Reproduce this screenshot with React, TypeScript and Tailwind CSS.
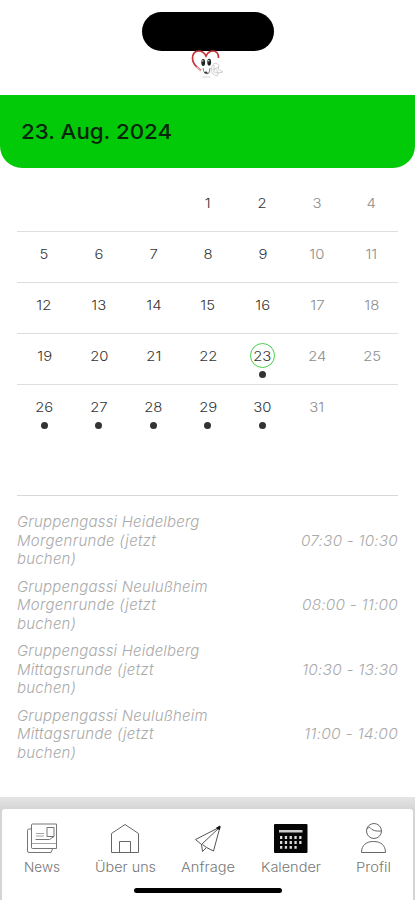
const weeks: (number | null)[][] = [
  [null, null, null, 1, 2, 3, 4],
  [5, 6, 7, 8, 9, 10, 11],
  [12, 13, 14, 15, 16, 17, 18],
  [19, 20, 21, 22, 23, 24, 25],
  [26, 27, 28, 29, 30, 31, null],
];

const selectedDay = 23;
const daysWithEvents = [23, 26, 27, 28, 29, 30];

const events = [
  { place: "Gruppengassi Heidelberg", round: "Morgenrunde (jetzt", time: "07:30 - 10:30", timeWidth: 97 },
  { place: "Gruppengassi Neulußheim", round: "Morgenrunde (jetzt", time: "08:00 - 11:00", timeWidth: 96 },
  { place: "Gruppengassi Heidelberg", round: "Mittagsrunde (jetzt", time: "10:30 - 13:30", timeWidth: 96 },
  { place: "Gruppengassi Neulußheim", round: "Mittagsrunde (jetzt", time: "11:00 - 14:00", timeWidth: 94 },
];

function Logo() {
  return (
    <svg width="34" height="28" viewBox="0 0 34 28" fill="none">
      <path d="M10 20.500C5 17 1.500 13 1.500 8.500C1.500 3.500 4 1 7.500 1C11 1 13.500 3 15 6C16.500 3 19 1 22 1C25.500 1 27.500 3.500 27.500 8" stroke="#c8353b" strokeWidth="1.700" />
      <path d="M5.500 17L10 21" stroke="#e9b5b7" strokeWidth="1.500" />
      <ellipse cx="12.200" cy="12.500" rx="1.900" ry="3.400" fill="#222" />
      <ellipse cx="18.200" cy="12.200" rx="1.900" ry="3.400" fill="#222" />
      <circle cx="11.800" cy="11" r="0.700" fill="#fff" />
      <circle cx="17.800" cy="10.700" r="0.700" fill="#fff" />
      <path d="M12 18l1 4 2 2 3-1 1-5" stroke="#777" strokeWidth="0.900" />
      <path d="M13.500 23l1.500-1 1.500 1.500" stroke="#333" strokeWidth="1.200" />
      <path d="M11.500 27h8" stroke="#ccc" strokeWidth="0.800" />
      <path d="M21 16c2-4 6-3 7 0l-1 3 5 3-5 1-1 3-4-2-2-3zM23 15v7l5 1M21 20l7-3M24 18l3 4" stroke="#c4c4c4" strokeWidth="0.800" />
    </svg>
  );
}

function NewsIcon() {
  return (
    <svg width="31" height="31" viewBox="0 0 31 31" fill="none" stroke="#666" strokeWidth="0.900">
      <path d="M5.500 1H29.500V25.500H5.500Q4.500 25.500 4.500 24.500V2Q4.500 1 5.500 1Z" />
      <path d="M4.500 6H2Q.5 6 .5 7.500V28Q.5 29.500 2 29.500H24L25.500 26" />
      <path d="M20 4.500H27V13.500H20ZM8.500 16.500H22.500L27 13.500" />
      <path d="M9 10.500H17M9 13H17M5 20.500H29" stroke="#999" />
    </svg>
  );
}

function HomeIcon() {
  return (
    <svg width="30" height="31" viewBox="0 0 30 31" fill="none" stroke="#666" strokeWidth="1">
      <path d="M1.500 29.500V10.500L15 1.500L28.500 10.500V29.500ZM9.500 29.500V18.500H20.500V29.500" />
    </svg>
  );
}

function SendIcon() {
  return (
    <svg width="30" height="31" viewBox="0 0 30 31" fill="none" stroke="#555" strokeWidth="1" strokeLinejoin="round">
      <path d="M27 4L2.500 16.500L8.500 21.500L9.500 28.500L13.500 24.500L20.500 28ZM27 4L8.500 21.500M9.500 21.500L13.500 24.500" />
      <path d="M27 3L23.500 5L26.500 6.500Z" fill="#111" stroke="#111" />
    </svg>
  );
}

function CalendarIcon() {
  return (
    <svg width="34" height="31" viewBox="0 0 34 31">
      <rect y="1" width="33.500" height="29" rx="1" fill="#050505" />
      <rect x="5" y="7" width="23.500" height="2.500" fill="#ccc" />
      <path d="M6 14.500H28M6 19.500H28M6 24.300H24" stroke="#ddd" strokeWidth="2.800" strokeDasharray="2.300 2.500" />
    </svg>
  );
}

function ProfileIcon() {
  return (
    <svg width="27" height="31" viewBox="0 0 27 31" fill="none" stroke="#666" strokeWidth="1">
      <circle cx="14" cy="8" r="7.500" />
      <path d="M6.800 6C8 5 9 4 10 4.500C12 7.500 16 8.500 21 8M1.500 29.500C1.500 22 6.500 18.500 13.500 18.500C20.500 18.500 25.500 22 25.500 29.500Z" />
    </svg>
  );
}

const tabs = [
  { label: "News", icon: <NewsIcon />, width: 36 },
  { label: "Über uns", icon: <HomeIcon />, width: 61 },
  { label: "Anfrage", icon: <SendIcon />, width: 54 },
  { label: "Kalender", icon: <CalendarIcon />, width: 60 },
  { label: "Profil", icon: <ProfileIcon />, width: 35 },
];

// keeps a label at a fixed width whatever font is picked
function FitText({ text, width, size, color }: { text: string; width: number; size: number; color: string }) {
  return (
    <svg width={width} height="20" className="block overflow-visible">
      <text x="0" y="15" textLength={width} lengthAdjust="spacingAndGlyphs" fontSize={size} fill={color}>
        {text}
      </text>
    </svg>
  );
}

export default function App() {
  return (
    <div className="flex h-[900px] w-[415px] flex-col overflow-hidden bg-white font-['Inter','Liberation_Sans',sans-serif]">
      <header className="flex h-[95px] shrink-0 flex-col items-center pt-[12px]">
        <div className="h-[39px] w-[132px] shrink-0 rounded-full bg-black" />
        <div className="-mt-px">
          <Logo />
        </div>
      </header>

      <div className="flex h-[73px] shrink-0 items-center rounded-b-[22px] bg-[#03ca08] pt-[2px] pl-[21px]">
        <h1 className="origin-left scale-x-[1.085] text-[20.500px] font-medium whitespace-nowrap text-[#06250a]">
          23. Aug. 2024
        </h1>
      </div>

      <section className="mx-[17px] h-[328px] shrink-0 border-b border-[#d8d8d8] pt-[13px]">
        {weeks.map((week, i) => (
          <div
            key={i}
            className={
              i < 4
                ? "h-[51px] border-b border-[#dedede]"
                : "h-[51px]"
            }
          >
            <div className="-mr-px grid grid-cols-7">
              {week.map((day, j) => (
                <div key={j} className="flex flex-col items-center pt-[9px]">
                  {day && (
                    <span
                      className={`flex size-[25px] shrink-0 items-center justify-center rounded-full border pt-[2px] text-[13.500px] font-light ${
                        day === selectedDay ? "border-[#45cf49]" : "border-transparent"
                      } ${j > 4 ? "text-[#8c8c8c]" : "text-[#333]"}`}
                    >
                      <span className="scale-x-[1.1]">{day}</span>
                    </span>
                  )}
                  {day && daysWithEvents.includes(day) && (
                    <span className="mt-[3px] size-[7px] shrink-0 rounded-full bg-[#333]" />
                  )}
                </div>
              ))}
            </div>
          </div>
        ))}
      </section>

      <section className="flex grow flex-col gap-[9px] px-[17px] pt-[17px] text-[15px] font-light italic leading-[18.500px] tracking-[0.200px] text-[#aaa]">
        {events.map((event) => (
          <div key={event.time} className="flex items-center justify-between">
            <p className="whitespace-nowrap">
              {event.place}
              <br />
              <span className="tracking-[0.300px]">{event.round}</span>
              <br />
              buchen)
            </p>
            <FitText text={event.time} width={event.timeWidth} size={14.5} color="#aaa" />
          </div>
        ))}
      </section>

      <footer className="h-[103px] shrink-0 bg-[#dfdfdf] bg-linear-to-b from-[#e5e5e5] to-[#d5d5d5] to-12% px-[2px] pt-[12px]">
        <nav className="flex h-full flex-col items-center rounded-t-[3px] bg-white pt-[14px]">
          <div className="grid w-[415px] grid-cols-5 pl-px">
            {tabs.map((tab) => (
              <div key={tab.label} className="flex flex-col items-center gap-[3px] font-light">
                {tab.icon}
                <FitText text={tab.label} width={tab.width} size={13} color="#777" />
              </div>
            ))}
          </div>
          <div className="mt-[11px] h-[5px] w-[148px] shrink-0 rounded-full bg-black" />
        </nav>
      </footer>
    </div>
  );
}
